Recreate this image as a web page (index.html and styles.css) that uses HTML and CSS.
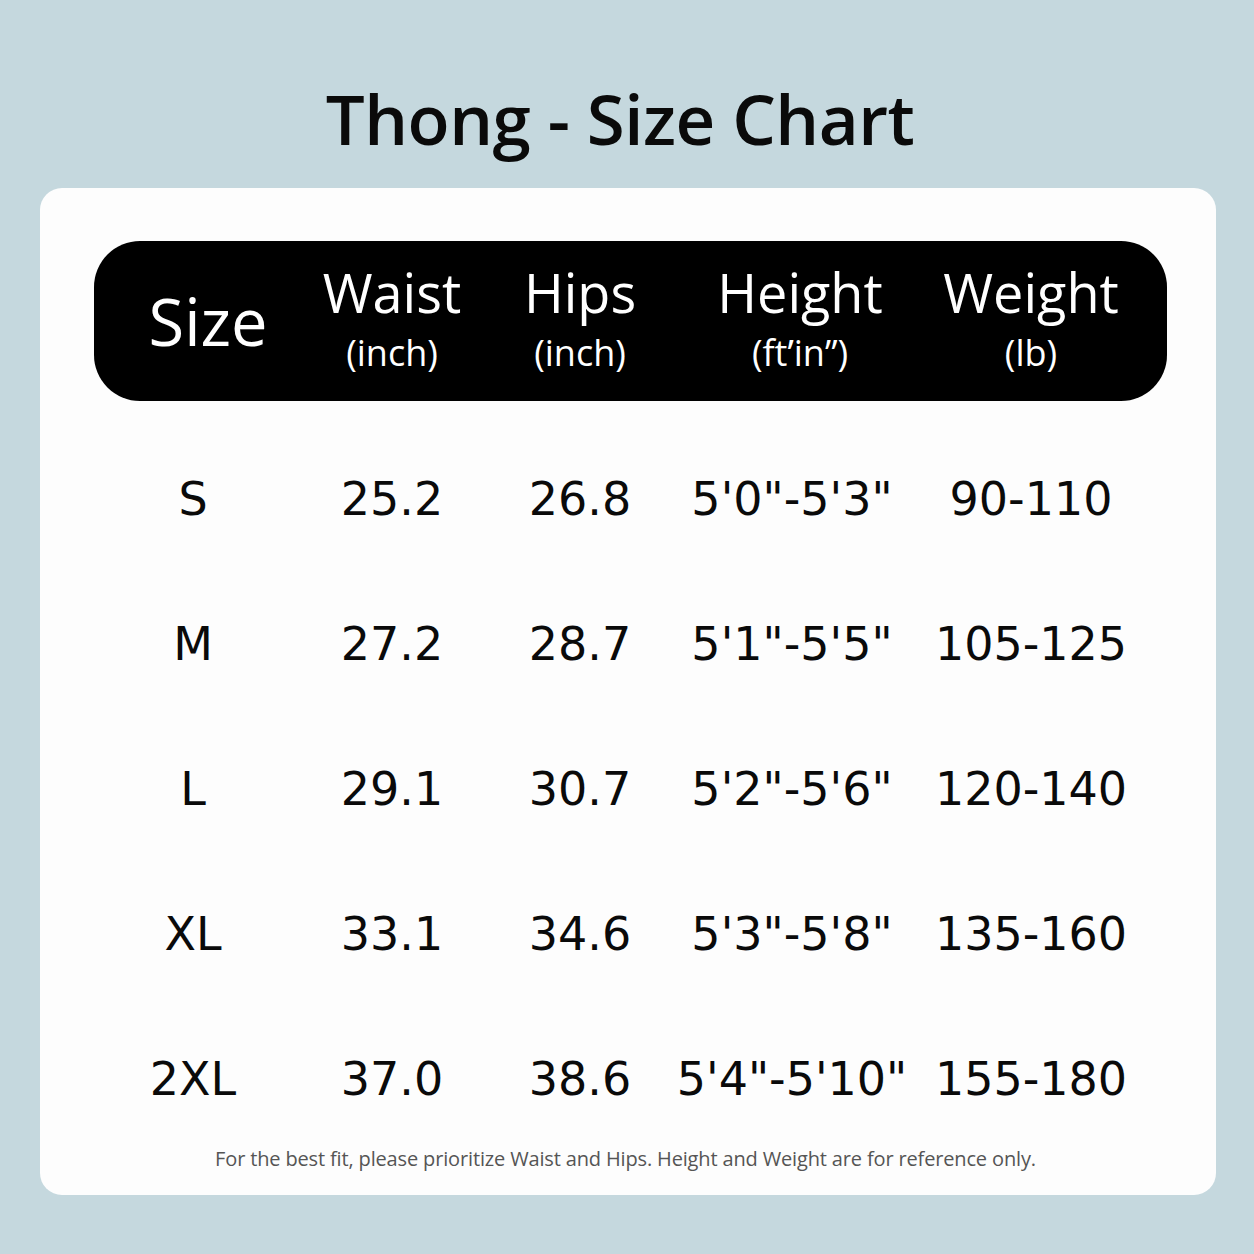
FILE: index.html
```html
<!DOCTYPE html>
<html>
<head>
<meta charset="utf-8">
<link rel="stylesheet" href="styles.css">
</head>
<body>
<div class="page">
  <h1 class="title">Thong - Size Chart</h1>
  <div class="card">
    <div class="head grid">
      <div class="hcell hsize">Size</div>
      <div class="hcell"><span class="hmain">Waist</span><span class="hsub">(inch)</span></div>
      <div class="hcell"><span class="hmain">Hips</span><span class="hsub">(inch)</span></div>
      <div class="hcell hheight"><span class="hmain">Height</span><span class="hsub">(ftʹin”)</span></div>
      <div class="hcell"><span class="hmain">Weight</span><span class="hsub">(lb)</span></div>
    </div>
    <div class="rows">
      <div class="row grid"><div>S</div><div>25.2</div><div>26.8</div><div>5'0"-5'3"</div><div>90-110</div></div>
      <div class="row grid"><div>M</div><div>27.2</div><div>28.7</div><div>5'1"-5'5"</div><div>105-125</div></div>
      <div class="row grid"><div>L</div><div>29.1</div><div>30.7</div><div>5'2"-5'6"</div><div>120-140</div></div>
      <div class="row grid"><div>XL</div><div>33.1</div><div>34.6</div><div>5'3"-5'8"</div><div>135-160</div></div>
      <div class="row grid"><div>2XL</div><div>37.0</div><div>38.6</div><div>5'4"-5'10"</div><div>155-180</div></div>
    </div>
    <p class="note">For the best fit, please prioritize Waist and Hips. Height and Weight are for reference only.</p>
  </div>
</div>
</body>
</html>
```

FILE: styles.css
```css
html, body {
  margin: 0;
  padding: 0;
  background: #c5d8de;
}
.page {
  width: 1254px;
  height: 1254px;
  box-sizing: border-box;
  padding: 0 38px 0 40px;
}
.title {
  margin: 0;
  height: 188px;
  box-sizing: border-box;
  padding-top: 78px;
  padding-right: 16px;
  text-align: center;
  font-family: "Open Sans", "Noto Sans", sans-serif;
  font-weight: 600;
  font-size: 69px;
  line-height: 80px;
  color: #0a0a0a;
  letter-spacing: -0.5px;
}
.card {
  background: #fdfdfd;
  border-radius: 22px;
  padding: 53px 49px 0 54px;
  height: 1007px;
  box-sizing: border-box;
}
.grid {
  display: grid;
  grid-template-columns: 198px 200px 176px 248px 230px 1fr;
}
.head {
  background: #000;
  color: #fff;
  height: 160px;
  border-radius: 46px;
  align-items: center;
  font-family: "Open Sans", "Noto Sans", sans-serif;
}
.hcell {
  display: flex;
  flex-direction: column;
  align-items: center;
  text-align: center;
}
.hsize {
  font-size: 65px;
  line-height: 70px;
  padding-left: 30px;
}
.hheight {
  padding-left: 16px;
}
.hmain {
  font-size: 54px;
  line-height: 58px;
}
.hsub {
  font-size: 36px;
  line-height: 52px;
  margin-top: 6px;
}
.rows {
  display: flex;
  flex-direction: column;
  gap: 85px;
  margin-top: 68px;
}
.row {
  height: 60px;
  align-items: center;
  font-family: "DejaVu Sans", sans-serif;
  font-size: 46px;
  line-height: 60px;
  color: #0a0a0a;
  text-align: center;
  white-space: nowrap;
}
.row > div {
  display: flex;
  justify-content: center;
}
.note {
  margin: 35px 0 0 0;
  text-align: center;
  font-family: "Open Sans", "Noto Sans", sans-serif;
  font-size: 20px;
  line-height: 30px;
  color: #555;
  letter-spacing: -0.15px;
  padding-right: 10px;
}
```
